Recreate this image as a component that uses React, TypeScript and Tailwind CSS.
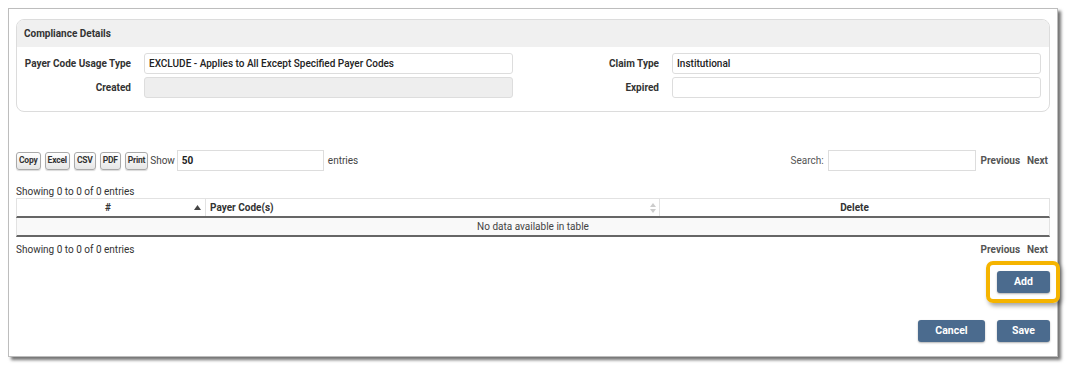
import React from 'react';

const font = { fontFamily: 'Roboto, "Liberation Sans", sans-serif' };

function SmallBtn({ label }: { label: string }) {
  return (
    <button className="h-[18px] px-[2px] rounded-[3px] border border-[#aaa] bg-gradient-to-b from-white to-[#e6e6e6] text-[8.5px] font-bold text-[#333] leading-none tracking-[-0.2px] shadow-[0_1px_1px_rgba(0,0,0,0.15)]">
      {label}
    </button>
  );
}

function Field({ label, value, disabled }: { label: string; value?: string; disabled?: boolean }) {
  return (
    <div
      className={`h-[21px] w-[369px] rounded-[3px] border border-[#ddd] px-[4px] flex items-center text-[10px] font-medium text-[#222] ${
        disabled ? 'bg-[#eeeeee]' : 'bg-white'
      }`}
      aria-label={label}
    >
      {value}
    </div>
  );
}

function BlueBtn({ label, w }: { label: string; w: string }) {
  return (
    <button className={`${w} h-[22px] rounded-[3px] bg-[#4b6b8e] text-white text-[10.5px] font-bold shadow-[0_1px_2px_rgba(0,0,0,0.3)]`}>
      {label}
    </button>
  );
}

export default function App() {
  return (
    <div className="w-[1071px] h-[365px] bg-white pt-[8px] pl-[8px] relative" style={font}>
      <div className="w-[1050px] h-[349px] border border-[#bdbdbd] bg-white shadow-[3px_3px_3px_rgba(0,0,0,0.55)] pt-[10px] pl-[7px] pr-[7px] flex flex-col">
        {/* Compliance details panel */}
        <div className="border border-[#dcdcdc] rounded-[8px] overflow-hidden">
          <div className="h-[27px] bg-[#f0f0f0] flex items-center pl-[7px] text-[10px] font-bold text-[#333]">
            Compliance Details
          </div>
          <div className="pt-[6px] pb-[13px] flex flex-col gap-[3px]">
            <div className="flex items-center">
              <div className="w-[114px] text-right text-[10px] font-bold text-[#333]">Payer Code Usage Type</div>
              <div className="w-[13px]" />
              <Field label="usage" value="EXCLUDE - Applies to All Except Specified Payer Codes" />
              <div className="w-[146px] text-right text-[10px] font-bold text-[#333]">Claim Type</div>
              <div className="w-[13px]" />
              <Field label="claim" value="Institutional" />
            </div>
            <div className="flex items-center">
              <div className="w-[114px] text-right text-[10px] font-bold text-[#333]">Created</div>
              <div className="w-[13px]" />
              <Field label="created" disabled />
              <div className="w-[146px] text-right text-[10px] font-bold text-[#333]">Expired</div>
              <div className="w-[13px]" />
              <Field label="expired" />
            </div>
          </div>
        </div>

        {/* Toolbar */}
        <div className="mt-[38px] h-[21px] flex items-center text-[10px] text-[#444]">
          <div className="flex items-center gap-[4px]">
            <SmallBtn label="Copy" />
            <SmallBtn label="Excel" />
            <SmallBtn label="CSV" />
            <SmallBtn label="PDF" />
            <SmallBtn label="Print" />
          </div>
          <span className="ml-[2px]">Show</span>
          <div className="ml-[2px] w-[147px] h-[21px] border border-[#ddd] flex items-center px-[4px] font-bold text-[#222]">50</div>
          <span className="ml-[4px]">entries</span>
          <div className="flex-1" />
          <span className="text-[#555]">Search:</span>
          <div className="ml-[4px] w-[148px] h-[21px] border border-[#ddd]" />
          <span className="ml-[5px] font-bold text-[#555]">Previous</span>
          <span className="ml-[7px] mr-[2px] font-bold text-[#555]">Next</span>
        </div>

        {/* Table */}
        <div className="mt-[16px] text-[10px] text-[#333] leading-none">Showing 0 to 0 of 0 entries</div>
        <div className="mt-[1px] w-[1034px] text-[10px]">
          <div className="flex h-[20px] border-t border-x border-[#e2e2e2] border-b-[2px] border-b-[#666] font-bold text-[#333]">
            <div className="w-[189px] relative flex items-center justify-center border-r border-[#e2e2e2]">
              <span className="-ml-[6px]">#</span>
              <svg className="absolute right-[4px] top-[6px]" width="7" height="5" viewBox="0 0 7 5">
                <path d="M0 5 L3.5 0 L7 5 Z" fill="#444" />
              </svg>
            </div>
            <div className="w-[454px] relative flex items-center pl-[4px] border-r border-[#e2e2e2]">
              Payer Code(s)
              <svg className="absolute right-[3px] top-[4px]" width="6" height="10" viewBox="0 0 6 10">
                <path d="M0 4 L3 0 L6 4 Z" fill="#ccc" />
                <path d="M0 6 L3 10 L6 6 Z" fill="#ccc" />
              </svg>
            </div>
            <div className="flex-1 flex items-center justify-center">Delete</div>
          </div>
          <div className="h-[19px] bg-[#f9f9f9] border-x border-[#e2e2e2] border-b-[2px] border-b-[#666] flex items-center justify-center text-[#444]">
            No data available in table
          </div>
        </div>
        <div className="mt-[5px] flex items-center text-[10px]">
          <span className="text-[#333]">Showing 0 to 0 of 0 entries</span>
          <div className="flex-1" />
          <span className="font-bold text-[#555]">Previous</span>
          <span className="ml-[7px] mr-[2px] font-bold text-[#555]">Next</span>
        </div>

        <div className="mt-[14px] flex justify-end">
          <BlueBtn label="Add" w="w-[53px]" />
        </div>
        <div className="mt-[27px] flex justify-end gap-[12px]">
          <BlueBtn label="Cancel" w="w-[67px]" />
          <BlueBtn label="Save" w="w-[53px]" />
        </div>
      </div>

      {/* highlight ring around Add */}
      <div className="absolute left-[986px] top-[261px] w-[74px] h-[42px] rounded-[7px] border-[4px] border-[#f5b400] shadow-[2px_3px_4px_rgba(0,0,0,0.35)] pointer-events-none" />
    </div>
  );
}
